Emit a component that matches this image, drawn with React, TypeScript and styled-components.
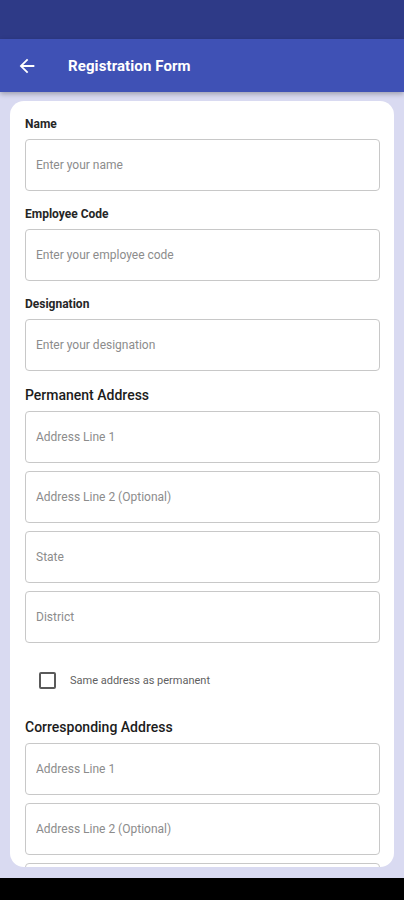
import React from "react";
import styled, { createGlobalStyle } from "styled-components";

const GlobalStyle = createGlobalStyle`
  html, body {
    margin: 0;
    padding: 0;
  }
  body {
    font-family: Roboto, "Noto Sans", "Liberation Sans", sans-serif;
    background: #000;
  }
  * {
    box-sizing: border-box;
  }
`;

const Screen = styled.div`
  width: 404px;
  height: 900px;
  display: flex;
  flex-direction: column;
  overflow: hidden;
  background: #000;
`;

const StatusBar = styled.div`
  height: 39px;
  flex-shrink: 0;
  background: #2e3a87;
`;

const AppBar = styled.header`
  position: relative;
  z-index: 1;
  height: 53px;
  flex-shrink: 0;
  display: flex;
  align-items: center;
  padding-left: 16px;
  background: #3f51b5;
  box-shadow: 0 2px 5px rgba(0, 0, 0, 0.28);
`;

const BackButton = styled.button`
  display: flex;
  align-items: center;
  justify-content: center;
  width: 22px;
  height: 22px;
  padding: 0;
  border: 0;
  background: none;
  color: #fff;
  cursor: pointer;
`;

const Title = styled.h1`
  margin: 0 0 0 30px;
  font-size: 15px;
  font-weight: 700;
  color: #fff;
  letter-spacing: 0.1px;
`;

const Body = styled.main`
  flex: 1;
  min-height: 0;
  display: flex;
  padding: 9px 10px 11px;
  background: #d9daf1;
`;

const Card = styled.form`
  flex: 1;
  overflow: hidden;
  padding: 15px 14px 0 15px;
  border-radius: 14px;
  background: #fff;
`;

const Field = styled.div`
  margin-bottom: 15px;
`;

const FieldLabel = styled.label`
  display: block;
  margin-bottom: 7px;
  font-size: 12px;
  line-height: 16px;
  font-weight: 700;
  color: #262626;
`;

const SectionTitle = styled.h2`
  margin: 0 0 7px;
  font-size: 14px;
  line-height: 18px;
  font-weight: 500;
  color: #1c1c1c;
`;

const Stack = styled.div`
  display: flex;
  flex-direction: column;
  gap: 8px;
`;

const TextInput = styled.input`
  display: block;
  width: 100%;
  height: 52px;
  padding: 0 10px;
  border: 1px solid #c8c8c8;
  border-radius: 4px;
  background: #fff;
  font-family: Roboto, "Noto Sans", sans-serif;
  font-size: 12px;
  color: #222;
  outline: none;

  &::placeholder {
    color: #8c8c8c;
  }
`;

const CheckRow = styled.label`
  display: flex;
  align-items: center;
  gap: 14px;
  height: 48px;
  margin: 13px 0 14px;
  padding-left: 14px;
  font-size: 11px;
  color: #5f5f5f;
`;

const CheckBox = styled.span`
  width: 17px;
  height: 17px;
  flex-shrink: 0;
  border: 2px solid #5a5a5a;
  border-radius: 2px;
`;

const ArrowBack = () => (
  <svg width="22" height="22" viewBox="0 0 24 24" fill="currentColor">
    <path d="M20 11H7.83l5.59-5.59L12 4l-8 8 8 8 1.41-1.41L7.83 13H20v-2z" />
  </svg>
);

const BottomBar = styled.div`
  height: 22px;
  flex-shrink: 0;
  background: #000;
`;

const fields = [
  { label: "Name", placeholder: "Enter your name" },
  { label: "Employee Code", placeholder: "Enter your employee code" },
  { label: "Designation", placeholder: "Enter your designation" },
];

const addressLines = ["Address Line 1", "Address Line 2 (Optional)", "State", "District"];

export default function App() {
  return (
    <>
      <GlobalStyle />
      <Screen>
        <StatusBar />
        <AppBar>
          <BackButton aria-label="Back">
            <ArrowBack />
          </BackButton>
          <Title>Registration Form</Title>
        </AppBar>
        <Body>
          <Card>
            {fields.map((f) => (
              <Field key={f.label}>
                <FieldLabel>{f.label}</FieldLabel>
                <TextInput placeholder={f.placeholder} />
              </Field>
            ))}
            <SectionTitle>Permanent Address</SectionTitle>
            <Stack>
              {addressLines.map((p) => (
                <TextInput key={p} placeholder={p} />
              ))}
            </Stack>
            <CheckRow>
              <CheckBox />
              Same address as permanent
            </CheckRow>
            <SectionTitle>Corresponding Address</SectionTitle>
            <Stack>
              {addressLines.map((p) => (
                <TextInput key={"c" + p} placeholder={p} />
              ))}
            </Stack>
          </Card>
        </Body>
        <BottomBar />
      </Screen>
    </>
  );
}
